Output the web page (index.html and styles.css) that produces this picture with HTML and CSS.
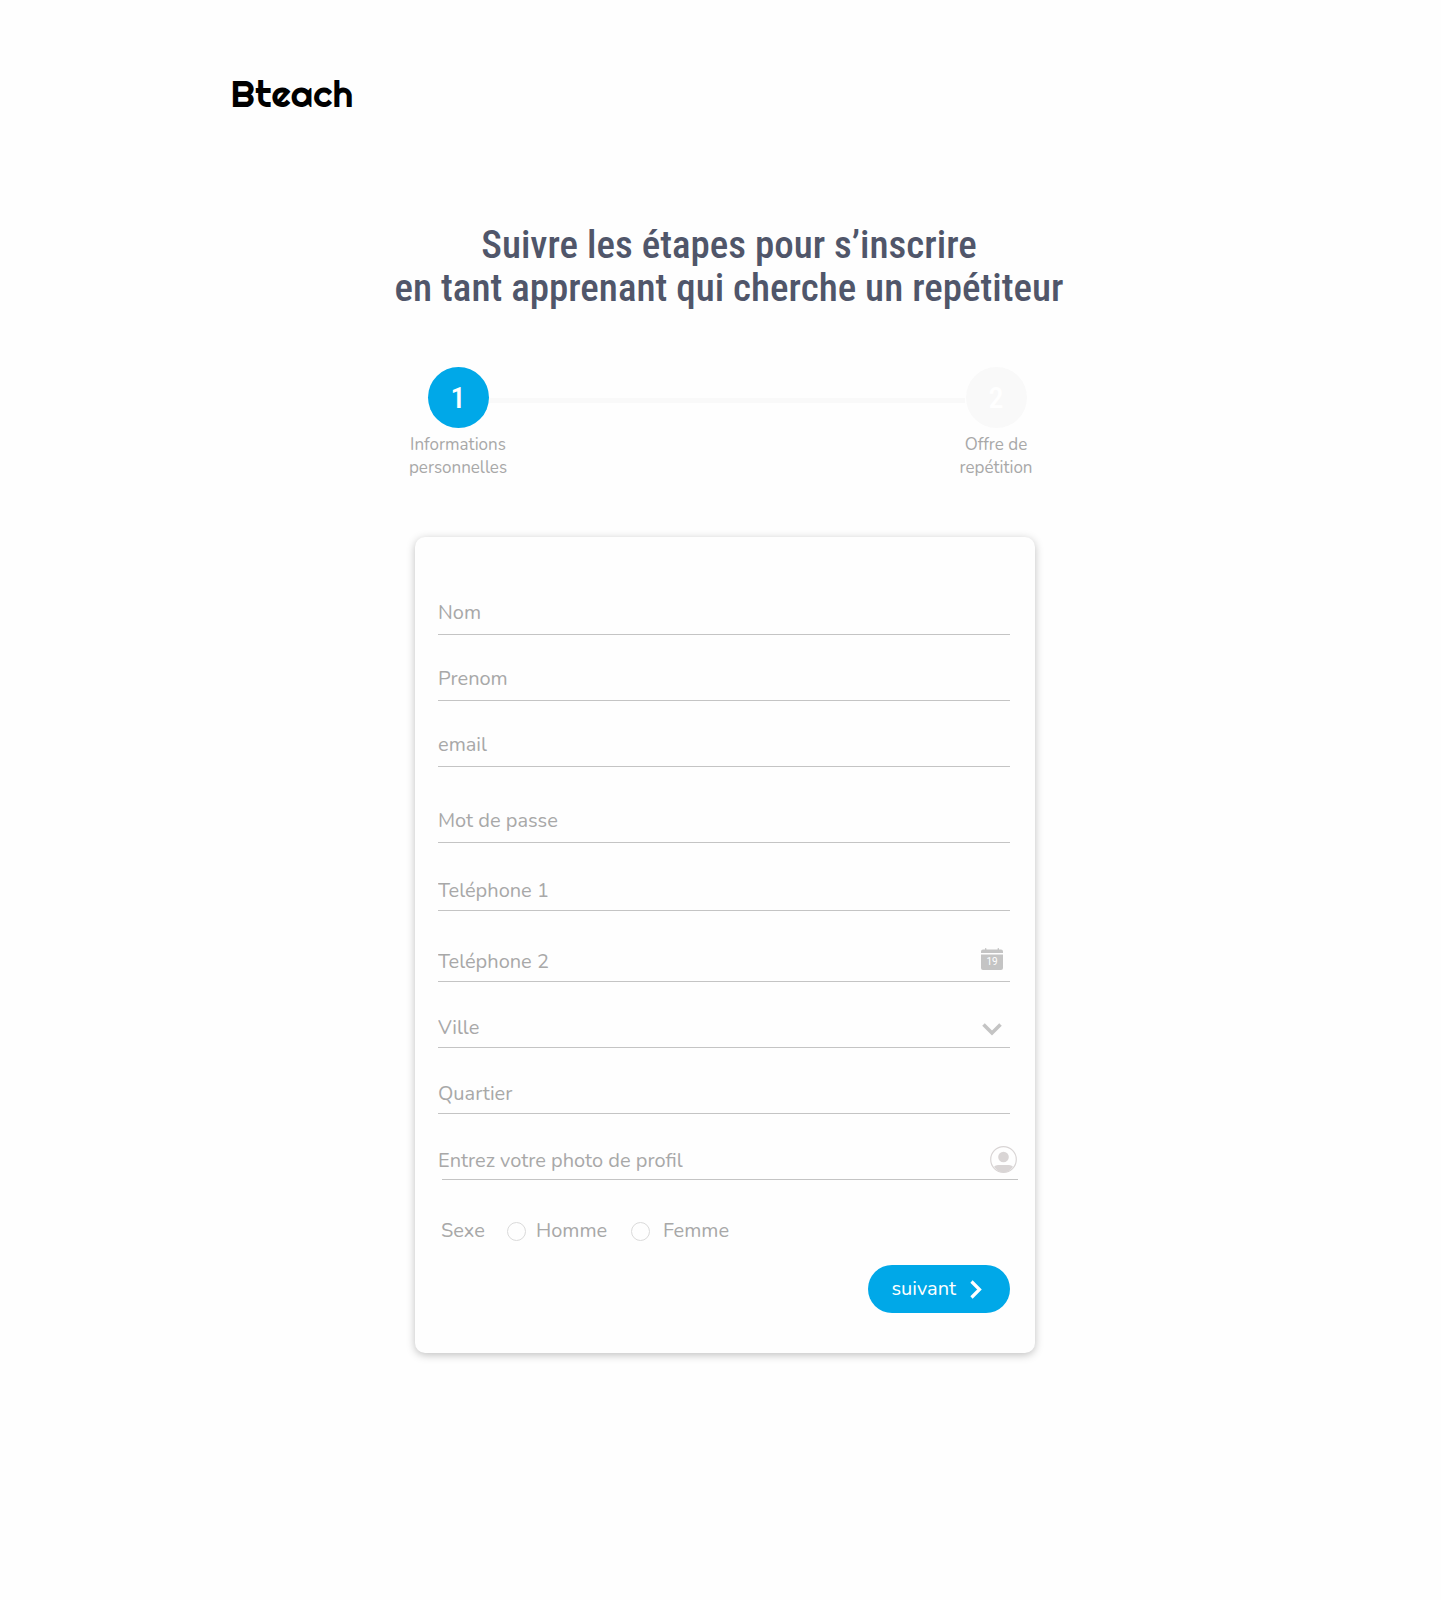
FILE: index.html
```html
<!DOCTYPE html>
<html lang="fr">
<head>
<meta charset="utf-8">
<meta name="viewport" content="width=device-width, initial-scale=1">
<title>Bteach</title>
<link rel="stylesheet" href="styles.css">
</head>
<body>
<header class="header">
  <a class="logo" href="#">Bteach</a>
</header>
<main class="main">
  <h1 class="title">Suivre les étapes pour s’inscrire<br>en tant apprenant qui cherche un repétiteur</h1>

  <ol class="steps">
    <li class="step step--active">
      <span class="step__number">1</span>
      <span class="step__label">Informations<br>personnelles</span>
    </li>
    <li class="steps__line" aria-hidden="true"></li>
    <li class="step">
      <span class="step__number">2</span>
      <span class="step__label">Offre de<br>repétition</span>
    </li>
  </ol>

  <form class="card">
    <div class="field field--high"><input class="field__input" type="text" aria-label="Nom" placeholder="Nom"></div>
    <div class="field field--high"><input class="field__input" type="text" aria-label="Prenom" placeholder="Prenom"></div>
    <div class="field field--high"><input class="field__input" type="email" aria-label="email" placeholder="email"></div>
    <div class="field field--high field--apart"><input class="field__input" type="password" aria-label="Mot de passe" placeholder="Mot de passe"></div>
    <div class="field field--tel1"><input class="field__input" type="tel" aria-label="Teléphone 1" placeholder="Teléphone 1"></div>
    <div class="field field--tel2">
      <input class="field__input" type="tel" aria-label="Teléphone 2" placeholder="Teléphone 2">
      <svg class="icon icon--calendar" viewBox="0 0 22 22" width="22" height="22" aria-hidden="true">
        <path fill="#c4c4c4" d="M0 5V3.500Q0 1.500 2 1.500H4V.8Q4 0 4.700 0T5.400.8V1.500H16.600V.8Q16.600 0 17.300 0T18 .8V1.500H20Q22 1.500 22 3.500V5ZM0 6.500H22V20Q22 22 20 22H2Q0 22 0 20Z"/>
        <text x="11" y="17" text-anchor="middle" class="icon__day">19</text>
      </svg>
    </div>
    <div class="field">
      <select class="field__input" aria-label="Ville"><option>Ville</option></select>
      <svg class="icon icon--chevron" viewBox="0 0 20 13" width="20" height="13" aria-hidden="true">
        <path d="M1.500 1.500L10 10L18.500 1.500" fill="none" stroke="#c4c4c4" stroke-width="3.600"/>
      </svg>
    </div>
    <div class="field"><input class="field__input" type="text" aria-label="Quartier" placeholder="Quartier"></div>
    <label class="field field--photo">
      <span class="field__text">Entrez votre photo de profil</span>
      <input class="field__file" type="file" accept="image/*">
      <svg class="icon icon--avatar" viewBox="0 0 27 27" width="27" height="27" aria-hidden="true">
        <circle cx="13.500" cy="13.500" r="12.800" fill="none" stroke="#d9d5d5" stroke-width="1.200"/>
        <circle cx="13.500" cy="11" r="5.300" fill="#d9d5d5"/>
        <path fill="#d9d5d5" d="M4 20.800Q5.500 19 8 19H19Q21.500 19 23 20.800Q19 26.300 13.500 26.300T4 20.800Z"/>
      </svg>
    </label>

    <fieldset class="gender">
      <legend class="gender__legend">Sexe</legend>
      <label class="gender__option"><input class="gender__radio" type="radio" name="sexe">Homme</label>
      <label class="gender__option gender__option--wide"><input class="gender__radio" type="radio" name="sexe">Femme</label>
    </fieldset>

    <button class="next" type="button">
      suivant
      <svg viewBox="0 0 12 19" width="12" height="19" aria-hidden="true">
        <path d="M1.500 1.500L9.500 9.500L1.500 17.500" fill="none" stroke="#fff" stroke-width="3.200"/>
      </svg>
    </button>
  </form>
</main>
</body>
</html>
```
FILE: styles.css
```css
* {
  box-sizing: border-box;
}

body {
  margin: 0;
  min-height: 100vh;
  background: #fefefe;
  color: #a8a8a8;
  font-family: Nunito, Lato, sans-serif;
  font-size: 20px;
  line-height: 24px;
}

.header {
  padding: 72px 16% 0;
}

.logo {
  color: #000;
  font-family: Righteous, Lato, sans-serif;
  font-size: 37px;
  font-weight: 400;
  line-height: 44px;
  text-decoration: none;
}

.main {
  display: flex;
  flex-direction: column;
  align-items: center;
  padding: 108px 0 80px 9px;
}

.title {
  margin: 0;
  padding-left: 8px;
  color: #50566a;
  font-family: "Roboto Condensed", "Liberation Sans Narrow", Roboto, sans-serif;
  font-size: 39px;
  font-weight: 500;
  line-height: 43px;
  text-align: center;
}

.steps {
  display: flex;
  width: 100%;
  max-width: 634px;
  margin: 57px 0 0 4px;
  padding: 0;
  list-style: none;
}

.step {
  display: flex;
  flex-direction: column;
  align-items: center;
  gap: 5px;
  width: 96px;
  text-align: center;
}

.step__number {
  width: 61px;
  height: 61px;
  border-radius: 50%;
  background: #f9f9f9;
  color: #fff;
  font-family: "Roboto Condensed", Roboto, sans-serif;
  font-size: 30px;
  font-weight: 500;
  line-height: 61px;
}

.step--active .step__number {
  background: #00a8e8;
}

.step__label {
  font-size: 17px;
  line-height: 23px;
}

.steps__line {
  flex: 1;
  height: 5px;
  margin: 31px -17px 0;
  background: #f9f9f9;
}

.card {
  display: flex;
  flex-direction: column;
  width: 100%;
  max-width: 620px;
  margin-top: 58px;
  padding: 32px 25px 40px 23px;
  border-radius: 10px;
  background: #fefefe;
  box-shadow: 0 2px 8px rgba(0, 0, 0, 0.25);
}

.field {
  display: flex;
  align-items: flex-end;
  height: 66px;
  padding-bottom: 7px;
  border-bottom: 1px solid #c4c4c4;
}

.field--high {
  padding-bottom: 9px;
}

.field--apart {
  margin-top: 10px;
}

.field--tel1 {
  margin-top: 2px;
}

.field--tel2 {
  margin-top: 5px;
}

.field--photo {
  position: relative;
  margin: 0 -8px 0 4px;
  padding-bottom: 6px;
}

.field__input {
  flex: 1;
  min-width: 0;
  height: 24px;
  padding: 0;
  border: 0;
  outline: 0;
  background: none;
  color: inherit;
  font: inherit;
  appearance: none;
}

.field__input::placeholder {
  color: inherit;
  opacity: 1;
}

.field__text {
  flex: 1;
  margin-left: -4px;
}

.field__file {
  position: absolute;
  inset: 0;
  width: 100%;
  opacity: 0;
}

.icon {
  flex: none;
}

.icon--calendar {
  margin: 0 7px 4px 0;
}

.icon--chevron {
  margin: 0 8px 4px 0;
}

.icon--avatar {
  margin-right: 1px;
}

.icon__day {
  fill: #fff;
  font-family: Roboto, sans-serif;
  font-size: 10px;
}

.gender {
  display: flex;
  align-items: center;
  margin: 39px 0 0 3px;
  padding: 0;
  border: 0;
}

.gender__legend {
  float: left;
  width: 66px;
  padding: 0;
}

.gender__option {
  display: flex;
  align-items: center;
  gap: 10px;
  width: 124px;
}

.gender__option--wide {
  gap: 13px;
}

.gender__radio {
  width: 19px;
  height: 19px;
  margin: 0;
  border: 1px solid #dadada;
  border-radius: 50%;
  appearance: none;
}

.next {
  display: flex;
  align-items: center;
  align-self: flex-end;
  gap: 14px;
  height: 48px;
  margin-top: 22px;
  padding: 0 28px 0 23px;
  border: 0;
  border-radius: 24px;
  background: #00a8e8;
  color: #fff;
  font: inherit;
}
```
